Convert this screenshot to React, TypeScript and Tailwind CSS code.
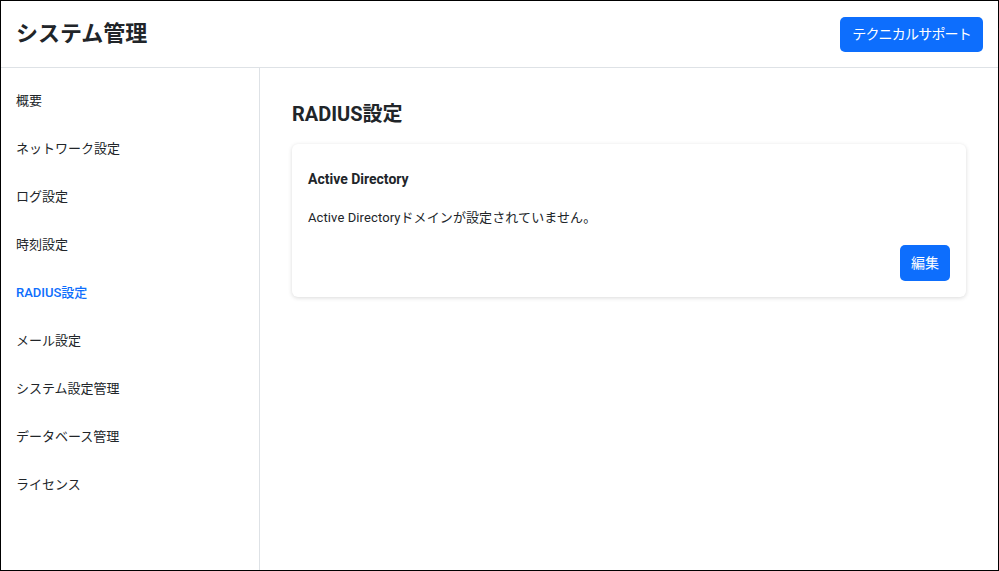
import React from "react";

const items = [
  "概要",
  "ネットワーク設定",
  "ログ設定",
  "時刻設定",
  "RADIUS設定",
  "メール設定",
  "システム設定管理",
  "データベース管理",
  "ライセンス",
];

export default function App() {
  return (
    <div
      className="w-[999px] h-[571px] border border-black bg-white flex flex-col text-[#212529] overflow-hidden"
      style={{ fontFamily: "Roboto, 'Noto Sans CJK JP', sans-serif" }}
    >
      <header className="h-[67px] shrink-0 border-b border-[#dee2e6] flex items-center justify-between pl-[15px] pr-[15px]">
        <h1 className="text-[22px] font-bold leading-none">システム管理</h1>
        <button className="h-[35px] px-3 rounded-[5px] bg-[#0d6efd] text-white text-[14px] tracking-[-0.8px]">
          テクニカルサポート
        </button>
      </header>
      <div className="flex flex-1 min-h-0">
        <nav className="w-[259px] shrink-0 border-r border-[#dee2e6] pt-[9px] pl-[15px]">
          {items.map((t) => (
            <div
              key={t}
              className={`h-12 flex items-center text-[13px] ${
                t === "RADIUS設定" ? "text-[#0d6efd] font-medium" : "text-[#212529]"
              }`}
            >
              {t}
            </div>
          ))}
        </nav>
        <main className="flex-1 px-8 pt-8">
          <h2 className="text-[20px] font-bold leading-7 mb-4">RADIUS設定</h2>
          <div className="bg-white rounded-[6px] shadow-[0_1px_4px_rgba(0,0,0,0.15)] pt-[25px] px-4 pb-4 flex flex-col">
            <div className="text-[14px] font-bold leading-5">Active Directory</div>
            <div className="text-[13px] leading-5 mt-[19px] tracking-[0.1px]">
              Active Directoryドメインが設定されていません。
            </div>
            <div className="flex justify-end mt-[17px]">
              <button className="h-9 w-[50px] rounded-[5px] bg-[#0d6efd] text-white text-[14px]">
                編集
              </button>
            </div>
          </div>
        </main>
      </div>
    </div>
  );
}
